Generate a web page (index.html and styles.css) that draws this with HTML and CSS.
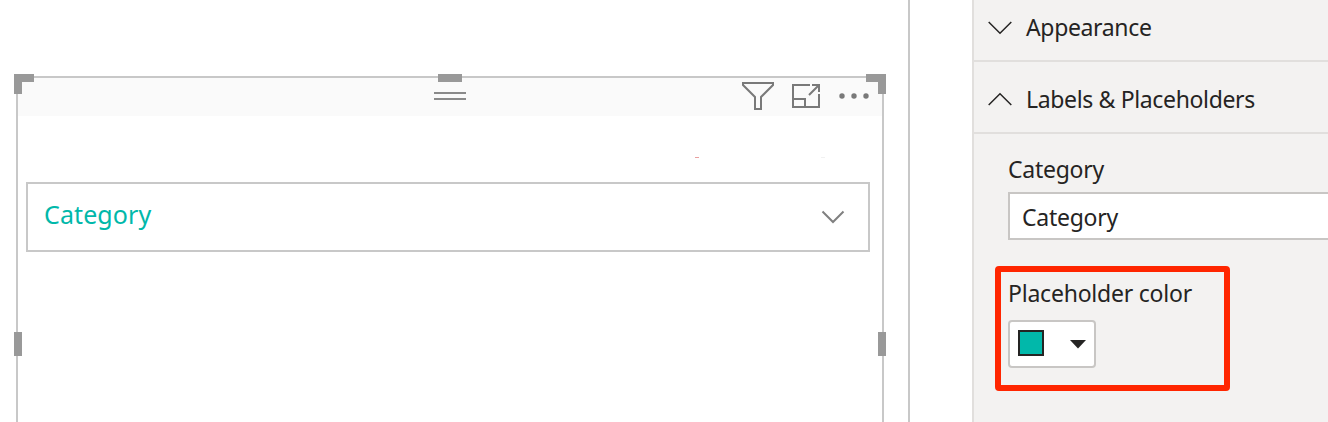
FILE: index.html
```html
<!DOCTYPE html>
<html lang="en">
<head>
<meta charset="utf-8">
<title>Report editor</title>
<link rel="stylesheet" href="styles.css">
</head>
<body>
<div class="editor">
  <main class="canvas">
    <section class="visual">
      <header class="visual-header">
        <div class="grip"></div>
        <div class="tools">
          <svg class="icon-filter" width="32" height="28" viewBox="0 0 32 28"><path d="M1 1H31V3L19 15V27H13V15L1 3Z"/></svg>
          <svg class="icon-focus" width="28" height="24" viewBox="0 0 28 24"><path d="M18 1H1V23H27V10M1 15H13V23M17 11L26.5 1.5M20 1H27V8"/></svg>
          <svg class="icon-more" width="30" height="6" viewBox="0 0 30 6"><circle cx="3" cy="3" r="2.7"/><circle cx="15" cy="3" r="2.7"/><circle cx="27" cy="3" r="2.7"/></svg>
        </div>
      </header>
      <div class="title-remnants"><i class="mark-red"></i><i class="mark-gray"></i></div>
      <div class="slicer">
        <span class="slicer-label">Category</span>
        <svg class="slicer-chevron" width="24" height="14" viewBox="0 0 24 14"><path d="M1.5 1.5L12 12L22.5 1.5"/></svg>
      </div>
      <i class="handle corner top-left"></i>
      <i class="handle top-middle"></i>
      <i class="handle corner top-right"></i>
      <i class="handle side side-left"></i>
      <i class="handle side side-right"></i>
    </section>
  </main>
  <aside class="panel">
    <div class="section first">
      <svg class="chevron" width="24" height="14" viewBox="0 0 24 14"><path d="M.7 1L12 12.3L23.3 1"/></svg>
      <span class="text appearance">Appearance</span>
    </div>
    <div class="section">
      <svg class="chevron" width="24" height="14" viewBox="0 0 24 14"><path d="M.7 13L12 1.7L23.3 13"/></svg>
      <span class="text labels">Labels &amp; Placeholders</span>
    </div>
    <div class="fields">
      <div class="text field-label">Category</div>
      <div class="text input">Category</div>
      <div class="highlight">
        <div class="text color-label">Placeholder color</div>
        <div class="color-button">
          <span class="swatch"></span>
          <svg width="16" height="9" viewBox="0 0 16 9"><path d="M0 0H16L8 8.5Z" fill="#252423"/></svg>
        </div>
      </div>
    </div>
  </aside>
</div>
</body>
</html>
```
FILE: styles.css
```css
* { box-sizing: border-box; }
body { margin: 0; background: #fff; font-family: "Noto Sans", "Open Sans", sans-serif; }
.editor { display: flex; width: 1328px; height: 422px; overflow: hidden; }

.canvas { width: 910px; flex: none; padding: 76px 0 0 16px; border-right: 2px solid #c8c8c8; }
.visual { position: relative; width: 868px; height: 346px; border: 2px solid #c8c8c8; border-bottom: 0; }
.visual-header { display: flex; justify-content: space-between; height: 38px; padding-left: 416px; padding-right: 13px; background: #fafafa; }
.grip { width: 32px; height: 8px; margin-top: 14px; border: solid #8a8a8a; border-width: 2px 0; }
.tools { display: flex; align-items: flex-start; }
.tools path { fill: none; stroke: #797979; stroke-width: 2; }
.icon-filter { margin-top: 4px; }
.icon-focus { margin: 6px 0 0 18px; }
.icon-more { margin: 15px 0 0 19px; fill: #797979; }
.title-remnants { display: flex; height: 66px; padding: 41px 0 0 677px; }
.mark-red { width: 4px; height: 1px; background: #e9a0a0; }
.mark-gray { width: 4px; height: 1px; margin-left: 122px; background: #f1f1f1; }
.slicer { display: flex; justify-content: space-between; width: 844px; height: 70px; margin-left: 8px; padding: 0 23px 0 16px; border: 2px solid #c8c8c8; background: #fff; }
.slicer-label { color: #01b8aa; font-size: 25px; line-height: 60px; letter-spacing: .1px; }
.slicer-chevron { margin-top: 26px; }
.slicer-chevron path { fill: none; stroke: #808080; stroke-width: 2; }

.handle { position: absolute; background: #999; }
.corner { top: -4px; width: 20px; height: 20px; background: none; border: solid #999; }
.top-left { left: -4px; border-width: 8px 0 0 8px; }
.top-right { right: -4px; border-width: 8px 8px 0 0; }
.top-middle { top: -4px; left: 420px; width: 24px; height: 8px; }
.side { top: 254px; width: 8px; height: 24px; }
.side-left { left: -4px; }
.side-right { right: -4px; }

.panel { flex: 1; margin-left: 62px; border-left: 2px solid #e1dfdd; background: #f3f2f1; }
.section { display: flex; align-items: center; gap: 14px; height: 72px; padding: 4px 0 0 14px; border-bottom: 2px solid #e1dfdd; }
.section.first { height: 62px; padding-top: 0; padding-bottom: 4px; }
.chevron path { fill: none; stroke: #252423; stroke-width: 1.5; }
.text { color: #252423; font-size: 23px; line-height: 32px; white-space: nowrap; letter-spacing: -.35px; }
.appearance { margin-top: -2px; }
.fields { padding: 19px 0 0 21px; }
.field-label { padding-left: 13px; letter-spacing: -.25px; }
.input { height: 48px; margin: 7px 0 0 13px; padding: 7px 12px; border: 2px solid #c8c6c4; border-right: 0; background: #fff; letter-spacing: -.25px; }
.highlight { width: 235px; height: 125px; margin-top: 26px; padding: 5px 0 0 7px; border: 6px solid #ff2600; border-radius: 4px; }
.color-label { letter-spacing: -.22px; }
.color-button { display: flex; align-items: center; justify-content: space-between; width: 88px; height: 48px; margin-top: 11px; padding: 0 8px; border: 2px solid #c8c6c4; border-radius: 4px; background: #fff; }
.swatch { width: 26px; height: 26px; margin-bottom: 2px; border: 2px solid #252423; background: #01b8aa; }
```
